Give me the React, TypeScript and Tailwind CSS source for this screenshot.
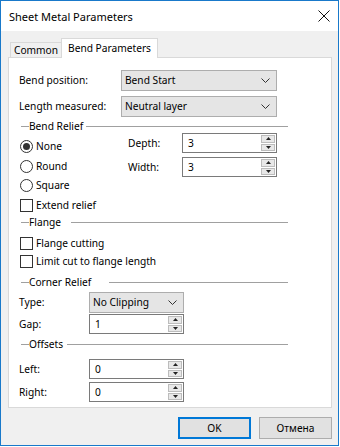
import React from 'react';

const font = { fontFamily: '"Noto Sans", "Open Sans", sans-serif' };

function GroupHeader({ label, gap }: { label: string; gap: string }) {
  return (
    <div className="flex items-center w-[267px] h-[14px] ml-[2px]">
      <span className="w-[8px] h-px bg-[#a0a0a0]" />
      <span className="leading-none">{label}</span>
      <span className={`flex-1 h-px bg-[#a0a0a0] ${gap}`} />
    </div>
  );
}

function Chevron() {
  return (
    <svg width="9" height="6" viewBox="0 0 9 6" className="shrink-0">
      <path d="M0.5 0.5 L4.5 4.5 L8.5 0.5" fill="none" stroke="#333" strokeWidth="1" />
    </svg>
  );
}

function Combo({ value, width }: { value: string; width: string }) {
  return (
    <div
      className={`${width} h-[21px] flex items-center justify-between bg-[#e5e5e5] border border-[#adadad] pl-[3px] pr-[6px]`}
    >
      <span className="leading-none">{value}</span>
      <Chevron />
    </div>
  );
}

function Spin({ value, width }: { value: string; width: string }) {
  return (
    <div className={`${width} h-[20px] flex bg-white border border-[#7a7a7a]`}>
      <span className="flex-1 flex items-center pl-[5px] leading-none">{value}</span>
      <div className="w-[16px] flex flex-col gap-px p-px">
        <div className="flex-1 flex items-center justify-center bg-[#e8e8e8] border border-[#bcbcbc]">
          <svg width="5" height="3" viewBox="0 0 5 3">
            <path d="M0 3 L2.5 0 L5 3 Z" fill="#222" />
          </svg>
        </div>
        <div className="flex-1 flex items-center justify-center bg-[#e8e8e8] border border-[#bcbcbc]">
          <svg width="5" height="3" viewBox="0 0 5 3">
            <path d="M0 0 L2.5 3 L5 0 Z" fill="#222" />
          </svg>
        </div>
      </div>
    </div>
  );
}

function Radio({ checked, label, h }: { checked?: boolean; label: string; h: string }) {
  return (
    <div className={`flex items-center ${h}`}>
      <span className="w-[13px] h-[13px] rounded-full border border-[#333] bg-white flex items-center justify-center">
        {checked && <span className="w-[7px] h-[7px] rounded-full bg-[#333]" />}
      </span>
      <span className="ml-[3px] leading-none">{label}</span>
    </div>
  );
}

function Check({ label, h, className = '' }: { label: string; h: string; className?: string }) {
  return (
    <div className={`flex items-center ${h} ${className}`}>
      <span className="w-[13px] h-[13px] border border-[#333] bg-white" />
      <span className="ml-[3px] leading-none">{label}</span>
    </div>
  );
}

export default function App() {
  return (
    <div className="w-[340px] h-[447px] bg-white text-[10.2px] text-black" style={font}>
      <div className="w-[339px] h-[446px] border border-[#1979ca] flex flex-col bg-[#f0f0f0]">
        {/* Title bar */}
        <div className="h-[30px] bg-white flex items-center justify-between pl-[8px] pr-[8px]">
          <span className="text-[11px] leading-none">Sheet Metal Parameters</span>
          <svg width="12" height="12" viewBox="0 0 12 12">
            <path d="M0.5 0.5 L11.5 11.5 M11.5 0.5 L0.5 11.5" stroke="#111" strokeWidth="1" />
          </svg>
        </div>

        {/* Tabs */}
        <div className="flex items-end h-[20px] mt-[7px] ml-[9px] -mb-px relative z-10">
          <div className="h-[16px] w-[52px] border border-[#d9d9d9] bg-[#f0f0f0] flex items-center justify-center leading-none">
            Common
          </div>
          <div className="h-[20px] w-[97px] -ml-px border border-b-0 border-[#d9d9d9] bg-white flex items-center justify-center leading-none pb-[1px]">
            Bend Parameters
          </div>
        </div>

        {/* Panel */}
        <div className="ml-[7px] w-[324px] h-[351px] border border-[#d9d9d9] bg-white pl-[10px] flex flex-col">
          <div className="flex items-center h-[21px] mt-[12px]">
            <span className="w-[102px] leading-none">Bend position:</span>
            <Combo value="Bend Start" width="w-[156px]" />
          </div>
          <div className="flex items-center h-[21px] mt-[5px]">
            <span className="w-[102px] leading-none">Length measured:</span>
            <Combo value="Neutral layer" width="w-[156px]" />
          </div>

          <div className="mt-[2px]">
            <GroupHeader label="Bend Relief" gap="ml-[3px]" />
          </div>
          <div className="flex ml-[1px]">
            <div className="w-[108px] flex flex-col pt-[3px]">
              <Radio checked label="None" h="h-[20px]" />
              <Radio label="Round" h="h-[20px]" />
              <Radio label="Square" h="h-[19px]" />
              <Check label="Extend relief" h="h-[20px]" />
            </div>
            <div className="flex flex-col">
              <div className="flex items-center h-[20px]">
                <span className="w-[54px] leading-none">Depth:</span>
                <Spin value="3" width="w-[95px]" />
              </div>
              <div className="flex items-center h-[20px] mt-[4px]">
                <span className="w-[54px] leading-none">Width:</span>
                <Spin value="3" width="w-[95px]" />
              </div>
            </div>
          </div>

          <GroupHeader label="Flange" gap="ml-[10px]" />
          <Check label="Flange cutting" h="h-[17px] mt-[6px] ml-[1px]" />
          <Check label="Limit cut to flange length" h="h-[18px] ml-[1px]" />

          <div className="mt-[5px]">
            <GroupHeader label="Corner Relief" gap="ml-[18px]" />
          </div>
          <div className="flex items-center h-[21px] mt-[3px]">
            <span className="w-[70px] leading-none">Type:</span>
            <Combo value="No Clipping" width="w-[95px]" />
          </div>
          <div className="flex items-center h-[20px] mt-[1px]">
            <span className="w-[70px] leading-none">Gap:</span>
            <Spin value="1" width="w-[95px]" />
          </div>

          <div className="mt-[3px]">
            <GroupHeader label="Offsets" gap="ml-[4px]" />
          </div>
          <div className="flex items-center h-[20px] mt-[8px]">
            <span className="w-[70px] leading-none">Left:</span>
            <Spin value="0" width="w-[95px]" />
          </div>
          <div className="flex items-center h-[20px] mt-[3px]">
            <span className="w-[70px] leading-none">Right:</span>
            <Spin value="0" width="w-[95px]" />
          </div>
        </div>

        {/* Buttons */}
        <div className="flex justify-end gap-[8px] mt-[9px] mr-[6px]">
          <button className="w-[73px] h-[22px] border border-[#0078d7] bg-[#e1e1e1] leading-none outline outline-1 outline-[#0078d7] -outline-offset-2">
            OK
          </button>
          <button className="w-[73px] h-[22px] border border-[#adadad] bg-[#e1e1e1] leading-none">
            Отмена
          </button>
        </div>
      </div>
    </div>
  );
}
